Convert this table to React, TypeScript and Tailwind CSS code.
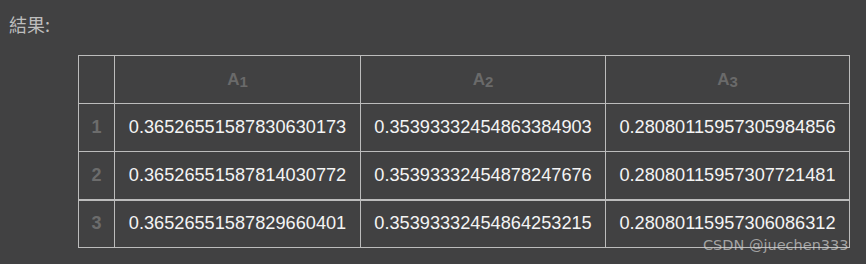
const rows = [
  ['0.36526551587830630173', '0.35393332454863384903', '0.28080115957305984856'],
  ['0.36526551587814030772', '0.35393332454878247676', '0.28080115957307721481'],
  ['0.36526551587829660401', '0.35393332454864253215', '0.28080115957306086312'],
];

export default function App() {
  return (
    <div className="relative w-[866px] h-[264px] bg-[#414142] overflow-hidden font-['Liberation_Sans',Arial,sans-serif]">
      <div className="pl-[9px] pt-[13px] h-[55px] text-[18px] leading-[22px] text-[#bdbdbd] font-['Noto_Sans_CJK_SC',sans-serif]">
        結果:
      </div>
      <div className="pl-[78px]">
        <table className="border-collapse text-center">
          <thead>
            <tr className="h-[48px]">
              <th className="w-[36px] border border-[#bcbcbc]"></th>
              {[1, 2, 3].map((n) => (
                <th
                  key={n}
                  className={`border border-[#bcbcbc] text-[#6a6a6a] text-[17px] font-bold ${n === 1 ? 'w-[246px]' : n === 2 ? 'w-[245px]' : 'w-[244px]'}`}
                >
                  A<sub className="text-[15px] font-bold relative top-[2px]">{n}</sub>
                </th>
              ))}
            </tr>
          </thead>
          <tbody>
            {rows.map((r, i) => (
              <tr key={i} className={`h-[48px] ${i === 2 ? 'border-t-2 border-[#bcbcbc]' : ''}`}>
                <td className={`border border-[#bcbcbc] text-[#6c6c6c] text-[18px] font-bold ${i === 2 ? 'border-t-2' : ''}`}>{i + 1}</td>
                {r.map((v, j) => (
                  <td key={j} className={`border border-[#bcbcbc] text-[#f4f4f4] text-[18.2px] ${i === 2 ? 'border-t-2' : ''}`}>
                    {v}
                  </td>
                ))}
              </tr>
            ))}
          </tbody>
        </table>
      </div>
      <div className="absolute left-[703px] top-[236px] text-[14.5px] leading-[18px] text-[#cfcfcf]/70 font-['DejaVu_Sans',sans-serif]">
        CSDN @juechen333
      </div>
    </div>
  );
}
